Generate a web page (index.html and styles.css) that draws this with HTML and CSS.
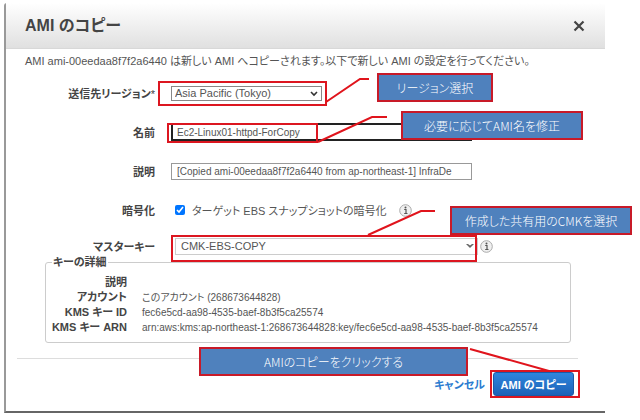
FILE: index.html
```html
<!DOCTYPE html>
<html lang="ja">
<head>
    <meta charset="UTF-8">
    <meta name="viewport" content="width=device-width, initial-scale=1.0">
    <title>AMI のコピー</title>
    <link rel="stylesheet" href="styles.css">
</head>
<body>

<div class="dialog">
    <header class="dialog-header">
        <h1>AMI のコピー</h1>
        <button type="button" class="close" aria-label="閉じる">
            <svg width="12" height="12" viewBox="0 0 12 12"><path d="M1.5 1.5L10.5 10.5M10.5 1.5L1.5 10.5" stroke="#444" stroke-width="2.2" fill="none"/></svg>
        </button>
    </header>

    <form class="dialog-body">
        <p class="intro">AMI ami-00eedaa8f7f2a6440 は新しい AMI へコピーされます。以下で新しい AMI の設定を行ってください。</p>

        <div class="row">
            <label for="region">送信先リージョン<span class="required">*</span></label>
            <div class="select region">
                <select id="region"><option>Asia Pacific (Tokyo)</option></select>
                <svg width="8" height="6" viewBox="0 0 8 6"><path d="M1 1L4 4L7 1" stroke="#333" stroke-width="1.6" fill="none"/></svg>
            </div>
        </div>
        <div class="row">
            <label for="name">名前</label>
            <input type="text" id="name" class="text focused" value="Ec2-Linux01-httpd-ForCopy">
        </div>
        <div class="row">
            <label for="description">説明</label>
            <input type="text" id="description" class="text" value="[Copied ami-00eedaa8f7f2a6440 from ap-northeast-1] InfraDe">
        </div>
        <div class="row row-encrypt">
            <span class="label">暗号化</span>
            <input type="checkbox" id="encrypt" checked>
            <label for="encrypt" class="check-label">ターゲット EBS スナップショットの暗号化</label>
            <svg class="info" width="13" height="13" viewBox="0 0 13 13"><circle cx="6.5" cy="6.5" r="5.8" fill="#f0f0f0" stroke="#aaa"/><path d="M5.2 5.5H7V9.5M5.2 9.5H8.5" stroke="#555" stroke-width="1.2" fill="none"/><circle cx="6.5" cy="3.4" r="1" fill="#555"/></svg>
        </div>
        <div class="row row-key">
            <label for="key">マスターキー</label>
            <div class="select key">
                <select id="key"><option>CMK-EBS-COPY</option></select>
                <svg width="8" height="6" viewBox="0 0 8 6"><path d="M0 1H2L4 2.5L6 1H8L4 5Z" fill="#666"/></svg>
            </div>
            <svg class="info" width="13" height="13" viewBox="0 0 13 13"><circle cx="6.5" cy="6.5" r="5.8" fill="#f0f0f0" stroke="#aaa"/><path d="M5.2 5.5H7V9.5M5.2 9.5H8.5" stroke="#555" stroke-width="1.2" fill="none"/><circle cx="6.5" cy="3.4" r="1" fill="#555"/></svg>
        </div>

        <fieldset>
            <legend>キーの詳細</legend>
            <dl>
                <dt>説明</dt><dd></dd>
                <dt>アカウント</dt><dd>このアカウント (268673644828)</dd>
                <dt>KMS キー ID</dt><dd>fec6e5cd-aa98-4535-baef-8b3f5ca25574</dd>
                <dt>KMS キー ARN</dt><dd>arn:aws:kms:ap-northeast-1:268673644828:key/fec6e5cd-aa98-4535-baef-8b3f5ca25574</dd>
            </dl>
        </fieldset>
    </form>

    <footer>
        <a href="#">キャンセル</a>
        <button type="button" class="primary">AMI のコピー</button>
    </footer>
</div>

<!-- 操作手順の注釈 -->
<div class="notes">
    <div class="mark mark-region"></div>
    <div class="mark mark-name"></div>
    <div class="mark mark-key"></div>
    <div class="mark mark-copy"></div>
    <svg class="leaders" width="640" height="420" viewBox="0 0 640 420">
        <path d="M326 102L360 79H369M318 142L372 117H387M368 235L421 211H435M470 349L549 371" fill="none" stroke="#e0141c" stroke-width="2"/>
    </svg>
    <div class="note note-region">リージョン選択</div>
    <div class="note note-name">必要に応じてAMI名を修正</div>
    <div class="note note-key">作成した共有用のCMKを選択</div>
    <div class="note note-copy">AMIのコピーをクリックする</div>
</div>

</body>
</html>
```
FILE: styles.css
```css
* {
    box-sizing: border-box;
}

body {
    margin: 0;
    position: relative;
    background: #fff;
    color: #555;
    font-family: "Liberation Sans", "Noto Sans CJK JP", sans-serif;
    font-size: 11px;
    font-feature-settings: "palt";
}

input, select, button {
    font: inherit;
    color: inherit;
    font-feature-settings: inherit;
}

.dialog {
    margin: 3px 35px 0 4px;
    border-left: 2px solid #999;
    border-bottom: 2px solid #666;
    border-top-left-radius: 3px;
}

.dialog-header {
    display: flex;
    justify-content: space-between;
    align-items: center;
    height: 46px;
    padding: 0 20px 0 19px;
    background: linear-gradient(#fff, #e0e0e0);
    border-bottom: 1px solid #d8d8d8;
}

h1 {
    margin: 0;
    font-size: 16px;
    line-height: 24px;
    color: #444;
}

.close {
    display: flex;
    padding: 0;
    border: none;
    background: none;
}

.dialog-body {
    padding: 0 34px 0 39px;
}

.intro {
    margin: 0 0 14px -20px;
    padding-top: 3px;
    line-height: 18px;
    white-space: nowrap;
}

/* 入力行 */
.row {
    display: flex;
    align-items: center;
    height: 18px;
    margin-bottom: 21px;
}

.row > label:first-child, .label {
    width: 110px;
    margin-right: 16px;
    text-align: right;
    font-weight: bold;
    color: #444;
    white-space: nowrap;
}

.required {
    font-weight: normal;
}

.select {
    position: relative;
}

.select select {
    display: block;
    width: 100%;
    height: 15px;
    padding: 0 3px;
    appearance: none;
    background: #fff;
    border: 1px solid #888;
    border-radius: 0;
}

.select svg {
    position: absolute;
    right: 4px;
    top: 5px;
}

.region {
    width: 151px;
}

.key {
    width: 303px;
    margin-left: 4px;
}

.key select {
    height: 17px;
    padding-left: 5px;
    border-color: #ccc;
}

.text {
    width: 301px;
    height: 17px;
    padding: 0 5px;
    border: 1px solid #999;
    border-radius: 0;
    font-size: 10px;
}

.focused {
    height: 18px;
    border: 2px solid #222;
    padding: 0 4px;
}

.row-encrypt {
    margin-bottom: 18px;
}

.row-encrypt input {
    width: 10px;
    height: 10px;
    margin: 0 7px 0 4px;
}

.check-label {
    margin-right: 12px;
}

.row-key {
    margin-bottom: 0;
}

.row-key .info {
    margin-left: 2px;
}

/* キーの詳細 */
fieldset {
    margin: 0;
    padding: 6px 0 7px;
    border: 1px solid #ccc;
    border-radius: 3px;
}

legend {
    margin-left: 6px;
    padding: 0 1px;
    line-height: 14px;
    font-weight: bold;
    color: #444;
}

dl {
    display: grid;
    grid-template-columns: 81px 1fr;
    column-gap: 15px;
    margin: 0;
    line-height: 15px;
}

dt {
    text-align: right;
    font-weight: bold;
    color: #444;
    white-space: nowrap;
}

dd {
    margin: 0;
    font-size: 10px;
    white-space: nowrap;
}

footer {
    display: flex;
    justify-content: flex-end;
    align-items: center;
    gap: 8px;
    margin: 15px 27px 0 11px;
    padding: 13px 4px 15px 0;
    border-top: 1px solid #ddd;
}

footer a {
    color: #2a7bd0;
    font-weight: bold;
    text-decoration: none;
}

.primary {
    height: 24px;
    width: 81px;
    padding: 0;
    color: #fff;
    font-weight: bold;
    background: linear-gradient(#2f86dc, #1d62b8);
    border: 1px solid #1c5aa6;
    border-radius: 3px;
}

/* 注釈 */
.leaders {
    position: absolute;
    left: 0;
    top: 0;
}

.mark {
    position: absolute;
    border: 2px solid #dc1620;
}

.mark-region { left: 158px; top: 81px; width: 169px; height: 25px; }
.mark-name { left: 167px; top: 123px; width: 151px; height: 20px; }
.mark-key { left: 171px; top: 235px; width: 306px; height: 27px; }
.mark-copy { left: 490px; top: 370px; width: 90px; height: 28px; }

.notes {
    position: absolute;
    left: 0;
    top: 0;
}

.note {
    position: absolute;
    display: flex;
    justify-content: center;
    align-items: center;
    height: 29px;
    color: #fff;
    background: #4f81bd;
    border: 2px solid #c81a28;
    font-family: "Noto Sans CJK JP", sans-serif;
    font-weight: 300;
    font-size: 12px;
    white-space: nowrap;
}

.note-region { left: 377px; top: 73px; width: 116px; }
.note-name { left: 401px; top: 111px; width: 182px; }
.note-key { left: 450px; top: 206px; width: 182px; }
.note-copy { left: 199px; top: 347px; width: 269px; }
```
